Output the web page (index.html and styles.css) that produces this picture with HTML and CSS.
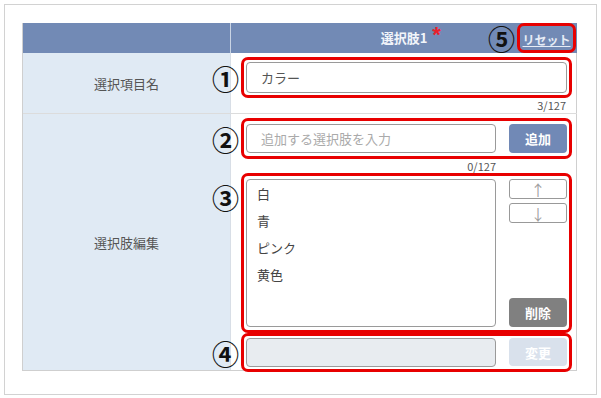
FILE: index.html
```html
<!DOCTYPE html>
<html lang="ja">
<head>
<meta charset="utf-8">
<link rel="stylesheet" href="styles.css">
</head>
<body>
<div class="frame">
  <div class="table">
    <div class="cell head-left"></div>
    <div class="cell head-right">
      <span></span>
      <span class="title">選択肢1<span class="req">*</span></span>
      <div class="hl reset-box"><span class="num">⑤</span><a class="reset">リセット</a></div>
    </div>

    <div class="cell label row1">選択項目名</div>
    <div class="cell body row1">
      <div class="hl box1"><span class="num">①</span>
        <div class="input">カラー</div>
      </div>
      <div class="counter c1">3/127</div>
    </div>

    <div class="cell label row2">選択肢編集</div>
    <div class="cell body row2">
      <div class="hl box2"><span class="num">②</span>
        <div class="input narrow placeholder">追加する選択肢を入力</div>
        <button class="btn add">追加</button>
      </div>
      <div class="counter c2">0/127</div>
      <div class="hl box3"><span class="num top">③</span>
        <div class="listbox">
          <div class="item">白</div>
          <div class="item">青</div>
          <div class="item">ピンク</div>
          <div class="item">黄色</div>
        </div>
        <div class="side">
          <button class="arrow">↑</button>
          <button class="arrow">↓</button>
          <button class="btn del">削除</button>
        </div>
      </div>
      <div class="hl box4"><span class="num">④</span>
        <div class="input narrow disabled"></div>
        <button class="btn change">変更</button>
      </div>
    </div>
  </div>
</div>
</body>
</html>
```

FILE: styles.css
```css
* { box-sizing: border-box; }
html, body { margin: 0; padding: 0; background: #fff; }
body {
  font-family: "Noto Sans CJK JP", "Noto Sans", sans-serif;
  color: #555;
}
.frame {
  margin: 4px;
  width: 593px;
  height: 391px;
  border: 1px solid #d2d2d2;
  padding: 18px 0 0 17px;
}
.table {
  width: 555px;
  display: grid;
  grid-template-columns: 207px 1fr;
  border: 1px solid #cfcfcf;
  border-top: none;
}
.cell { position: relative; }
.head-left { background: #728ab5; height: 30px; }
.head-right {
  background: #728ab5;
  height: 30px;
  border-left: 1px solid #c9d4e4;
  display: grid;
  grid-template-columns: 1fr auto 1fr;
  align-items: center;
}
.title {
  color: #f2f5fa;
  font-size: 13px;
  font-weight: bold;
  position: relative;
  top: -1px;
}
.req {
  color: #e8202a;
  font-size: 22px;
  font-weight: bold;
  font-family: "Liberation Sans", sans-serif;
  position: absolute;
  top: -4px;
  left: calc(100% + 5px);
  line-height: 1;
}
.reset-box {
  justify-self: end;
  margin-right: 1px;
  height: 30px;
  width: 59px;
  display: flex;
  align-items: center;
  justify-content: center;
}
.reset {
  color: #e6ecf6;
  font-size: 12px;
  text-decoration: underline;
  font-weight: bold;
  position: relative;
  top: 1px;
}
.label {
  background: #e0eaf4;
  display: flex;
  align-items: center;
  justify-content: center;
  font-size: 13px;
  color: #555;
}
.label.row1 { border-bottom: 1px solid #dcdcdc; }
.body { border-left: 1px solid #d8dee6; padding: 4px 5px 0 10px; }
.body.row1 { border-bottom: 1px solid #dcdcdc; height: 61px; }
.body.row2 { height: 256px; }

.hl {
  position: relative;
  border: 3px solid #e80000;
  border-radius: 7px;
}
.num {
  position: absolute;
  right: calc(100% + 5px);
  top: 50%;
  transform: translateY(-50%);
  font-size: 27px;
  font-weight: bold;
  line-height: 1;
  color: #111;
  font-family: "Noto Sans CJK JP", sans-serif;
}
.num.top { top: 8px; transform: none; }
.reset-box .num { right: calc(100% + 5px); }

.box1 { padding: 2px; }
.input {
  height: 31px;
  border: 1px solid #9a9a9a;
  border-radius: 4px;
  background: #fff;
  font-size: 13px;
  color: #555;
  padding-left: 14px;
  display: flex;
  align-items: center;
}
.input.narrow { width: 250px; height: 29px; }
.placeholder { color: #aaa; }
.disabled { background: #e8ecf0; height: 28px; }
.counter {
  font-size: 11px;
  color: #555;
  text-align: right;
  line-height: 14px;
  height: 14px;
}
.c1 { padding-right: 6px; }
.c2 { padding-right: 76px; }

.box2, .box4 {
  padding: 3px 2px;
  display: flex;
  gap: 13px;
}
.box4 { padding: 2px; }
.btn {
  width: 58px;
  border: none;
  border-radius: 4px;
  color: #fff;
  font-family: inherit;
  font-size: 13px;
  font-weight: bold;
  padding: 0;
}
.add { background: #7189b6; }
.del { background: #808080; height: 29px; margin-top: auto; }
.change { background: #d9e1ec; height: 28px; }

.box3 {
  padding: 3px 2px 3px 2px;
  display: flex;
  gap: 13px;
}
.listbox {
  width: 250px;
  height: 148px;
  border: 1px solid #9a9a9a;
  border-radius: 4px;
  padding: 0 0 0 10px;
}
.item {
  font-size: 13px;
  color: #444;
  line-height: 27px;
}
.side {
  width: 58px;
  display: flex;
  flex-direction: column;
  gap: 4px;
}
.arrow {
  height: 20px;
  background: #fff;
  border: 1px solid #999;
  border-radius: 3px;
  color: #a0a0a0;
  font-size: 15px;
  line-height: 1;
  padding: 0;
  font-family: "Noto Sans CJK JP", sans-serif;
}
```
